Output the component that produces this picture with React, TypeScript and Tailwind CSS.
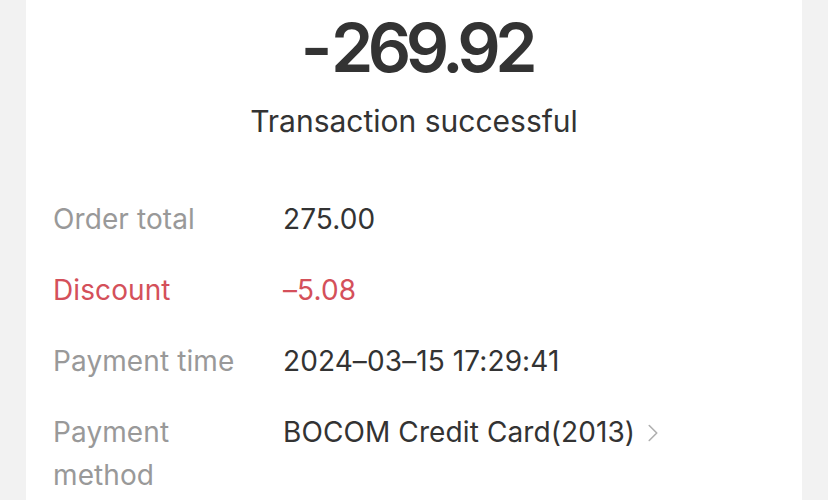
import { ChevronRight } from 'lucide-react';

const ROWS = [
  { label: 'Order total', value: '275.00' },
  { label: 'Discount', value: '–5.08', red: true },
  { label: 'Payment time', value: '2024–03–15 17:29:41' },
  { label: 'Payment method', value: 'BOCOM Credit Card(2013)', link: true },
];

const App = () => {
  return (
    <div
      className="w-[828px] h-[500px] overflow-hidden bg-[#f2f2f2] px-[26px]"
      style={{ fontFamily: 'Inter, "Noto Sans", sans-serif' }}
    >
      <div className="h-full bg-white">
        {/* amount */}
        <div className="flex flex-col items-center pt-[4px]">
          <p className="text-[68px] font-semibold leading-[86px] text-[#333] tracking-[-5.5px] pl-[5px]">
            <span className="mr-[4px]">-</span>269.92
          </p>
          <p className="mt-[11px] text-[30px] leading-[40px] text-[#333]">Transaction successful</p>
        </div>

        {/* details */}
        <div className="mt-[57px] flex flex-col gap-[28px] pl-[27px]">
          {ROWS.map(row => (
            <div key={row.label} className="flex items-start text-[28px] leading-[43px] tracking-[0.1px]">
              <span className={`w-[230px] shrink-0 pr-[40px] ${row.red ? 'text-[#d4505a]' : 'text-[#999]'}`}>
                {row.label}
              </span>
              <span className={`flex items-center ${row.red ? 'text-[#d4505a]' : 'text-[#333]'}`}>
                {row.value}
                {row.link && <ChevronRight className="ml-[3px] w-[30px] h-[30px] text-[#b0b0b0]" strokeWidth={1.3} />}
              </span>
            </div>
          ))}
        </div>
      </div>
    </div>
  );
};

export default App;
